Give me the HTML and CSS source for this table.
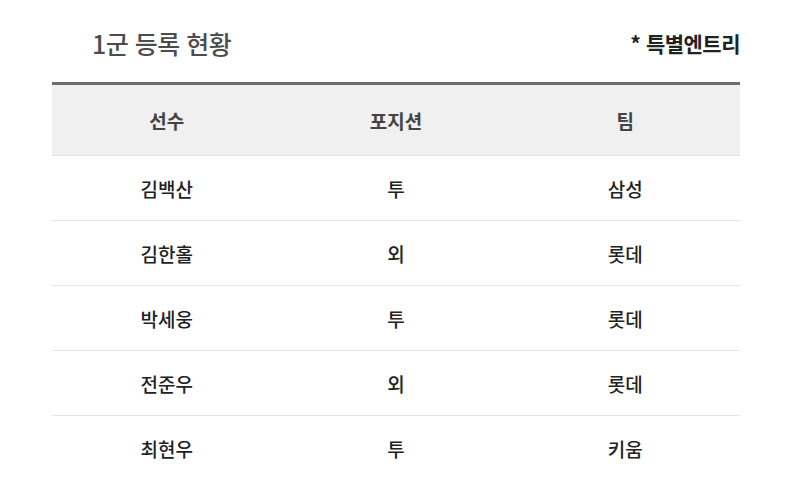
FILE: index.html
```html
<!DOCTYPE html>
<html lang="ko">
<head>
<meta charset="utf-8">
<link rel="stylesheet" href="styles.css">
</head>
<body>
<div class="page">
  <div class="head">
    <h1 class="title">1군 등록 현황</h1>
    <div class="note">* 특별엔트리</div>
  </div>
  <div class="table">
    <div class="row header">
      <div class="cell">선수</div>
      <div class="cell">포지션</div>
      <div class="cell">팀</div>
    </div>
    <div class="row">
      <div class="cell">김백산</div>
      <div class="cell">투</div>
      <div class="cell">삼성</div>
    </div>
    <div class="row">
      <div class="cell">김한홀</div>
      <div class="cell">외</div>
      <div class="cell">롯데</div>
    </div>
    <div class="row">
      <div class="cell">박세웅</div>
      <div class="cell">투</div>
      <div class="cell">롯데</div>
    </div>
    <div class="row">
      <div class="cell">전준우</div>
      <div class="cell">외</div>
      <div class="cell">롯데</div>
    </div>
    <div class="row">
      <div class="cell">최현우</div>
      <div class="cell">투</div>
      <div class="cell">키움</div>
    </div>
  </div>
</div>
</body>
</html>
```
FILE: styles.css
```css
* { box-sizing: border-box; }
html, body { margin: 0; padding: 0; background: #fff; }
body {
  font-family: "Noto Sans CJK KR", "Noto Sans", sans-serif;
  color: #222;
  width: 800px;
  height: 480px;
  overflow: hidden;
}
.page {
  padding: 0 60px 0 52px;
}
.head {
  display: flex;
  justify-content: space-between;
  align-items: center;
  height: 82px;
  padding: 4px 0 0 40px;
}
.title {
  margin: 0;
  font-size: 25px;
  font-weight: 500;
  color: #4d4d4d;
  letter-spacing: -0.5px;
}
.note {
  font-size: 21px;
  font-weight: 700;
  color: #222;
  letter-spacing: -0.5px;
}
.table {
  border-top: 3px solid #6b6b6b;
}
.row {
  display: grid;
  grid-template-columns: 1fr 1fr 1fr;
  height: 65px;
  border-bottom: 1px solid #e6e6e6;
  align-items: center;
}
.row.header {
  height: 71px;
  background: #f0f0f0;
  border-bottom: 1px solid #e3e3e3;
}
.cell {
  text-align: center;
  font-size: 19px;
  font-weight: 500;
  color: #222;
}
.header .cell {
  font-weight: 700;
  color: #444;
}
```
